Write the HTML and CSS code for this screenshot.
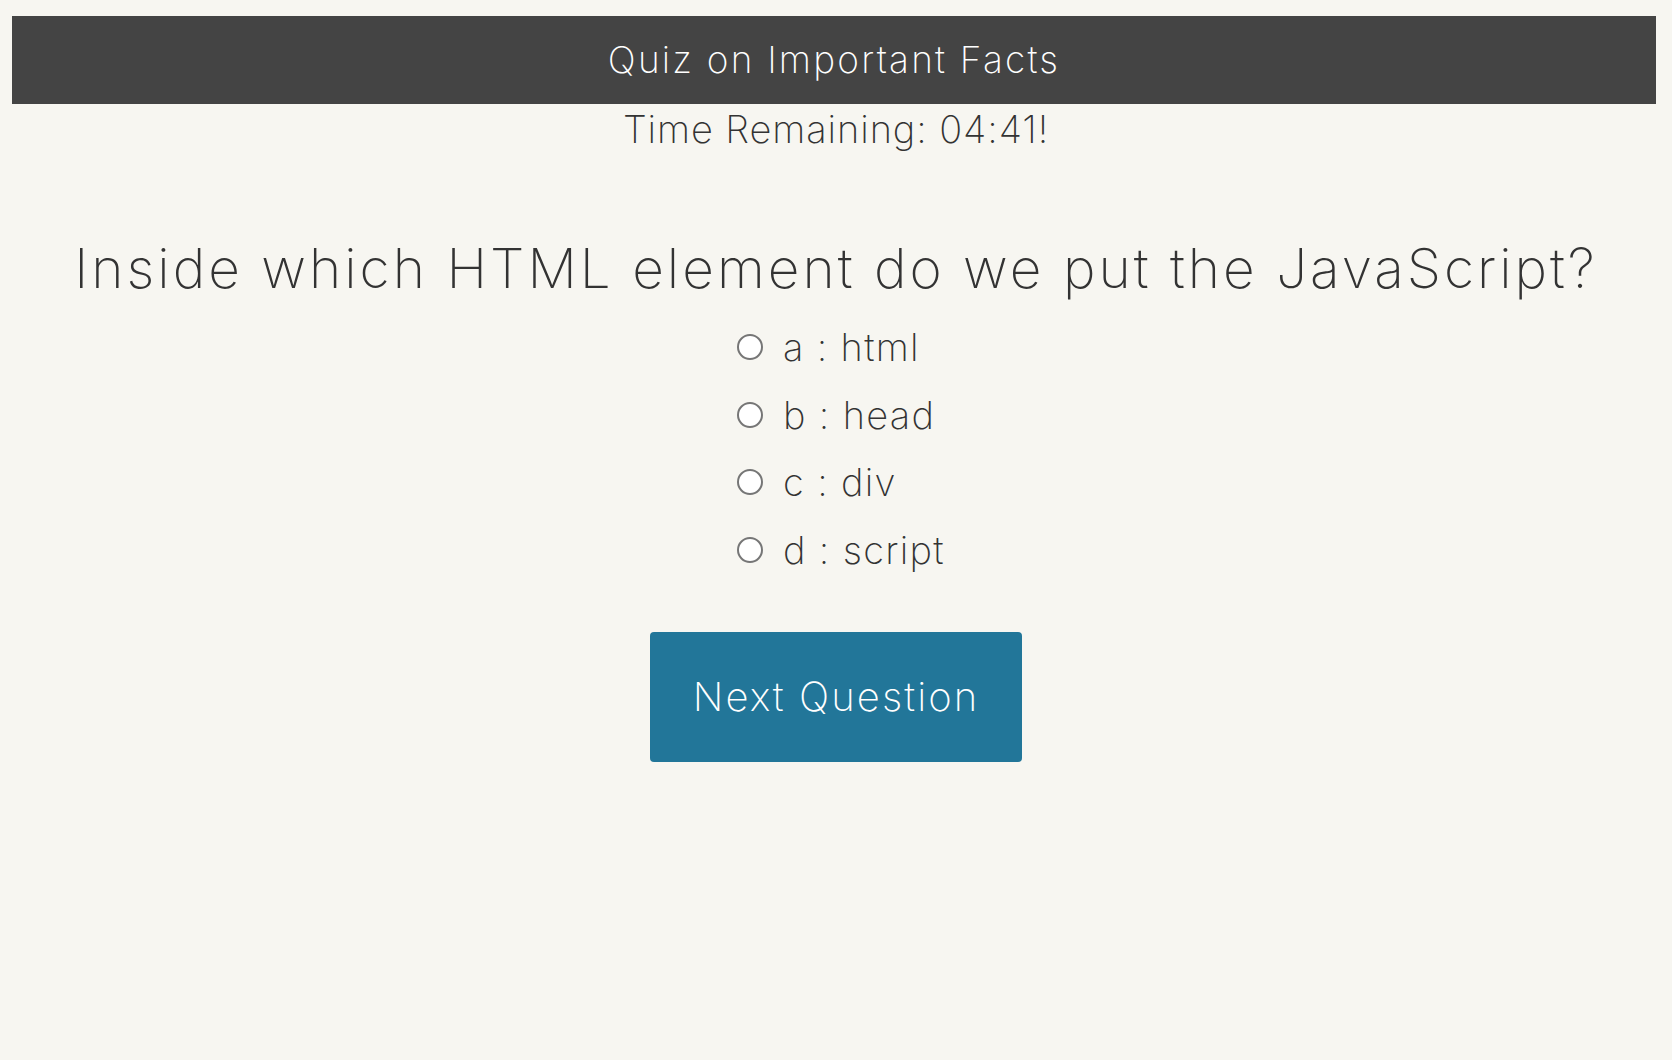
FILE: index.html
```html
<!DOCTYPE html>
<html lang="en">
<head>
<meta charset="utf-8">
<title>Quiz on Important Facts</title>
<link rel="stylesheet" href="styles.css">
</head>
<body>
<header class="topbar"><h1 class="title">Quiz on Important Facts</h1></header>
<main class="quiz">
  <p class="timer">Time Remaining: 04:41!</p>
  <h2 class="question">Inside which HTML element do we put the JavaScript?</h2>
  <div class="options">
    <label class="option"><input type="radio" name="q" class="radio"><span>a : html</span></label>
    <label class="option"><input type="radio" name="q" class="radio"><span>b : head</span></label>
    <label class="option"><input type="radio" name="q" class="radio"><span>c : div</span></label>
    <label class="option"><input type="radio" name="q" class="radio"><span>d : script</span></label>
  </div>
  <button class="next" type="button">Next Question</button>
</main>
</body>
</html>
```
FILE: styles.css
```css
html, body {
  margin: 0;
  padding: 0;
}
body {
  background: #f7f6f1;
  color: #333333;
  font-family: Inter, "Noto Sans", sans-serif;
  font-weight: 200;
  padding-top: 16px;
}
.topbar {
  margin: 0 16px 0 12px;
  height: 88px;
  background: #444444;
  display: flex;
  align-items: center;
  justify-content: center;
}
.title {
  margin: 0;
  color: #ffffff;
  font-size: 37px;
  font-weight: 200;
  letter-spacing: 2.2px;
  line-height: 48px;
}
.quiz {
  display: flex;
  flex-direction: column;
  align-items: center;
}
.timer {
  margin: 0;
  font-size: 38px;
  letter-spacing: 0.9px;
  line-height: 50px;
}
.question {
  margin: 79px 0 0;
  font-size: 55px;
  font-weight: 200;
  letter-spacing: 3px;
  line-height: 70px;
}
.options {
  margin-top: 20px;
  display: flex;
  flex-direction: column;
  gap: 19.5px;
}
.option {
  display: flex;
  align-items: center;
  gap: 20px;
  font-size: 38px;
  letter-spacing: 1.3px;
  line-height: 48px;
}
.radio {
  appearance: none;
  -webkit-appearance: none;
  margin: 0 0 0 10px;
  width: 26px;
  height: 26px;
  border: 2px solid #767676;
  border-radius: 50%;
  background: #ffffff;
  box-sizing: border-box;
}
.next {
  margin-top: 58px;
  padding: 40px 43px;
  background: #227699;
  color: #ffffff;
  border: none;
  border-radius: 4px;
  font-family: Inter, "Noto Sans", sans-serif;
  font-weight: 200;
  font-size: 40px;
  letter-spacing: 2.1px;
  line-height: 50px;
}
```
